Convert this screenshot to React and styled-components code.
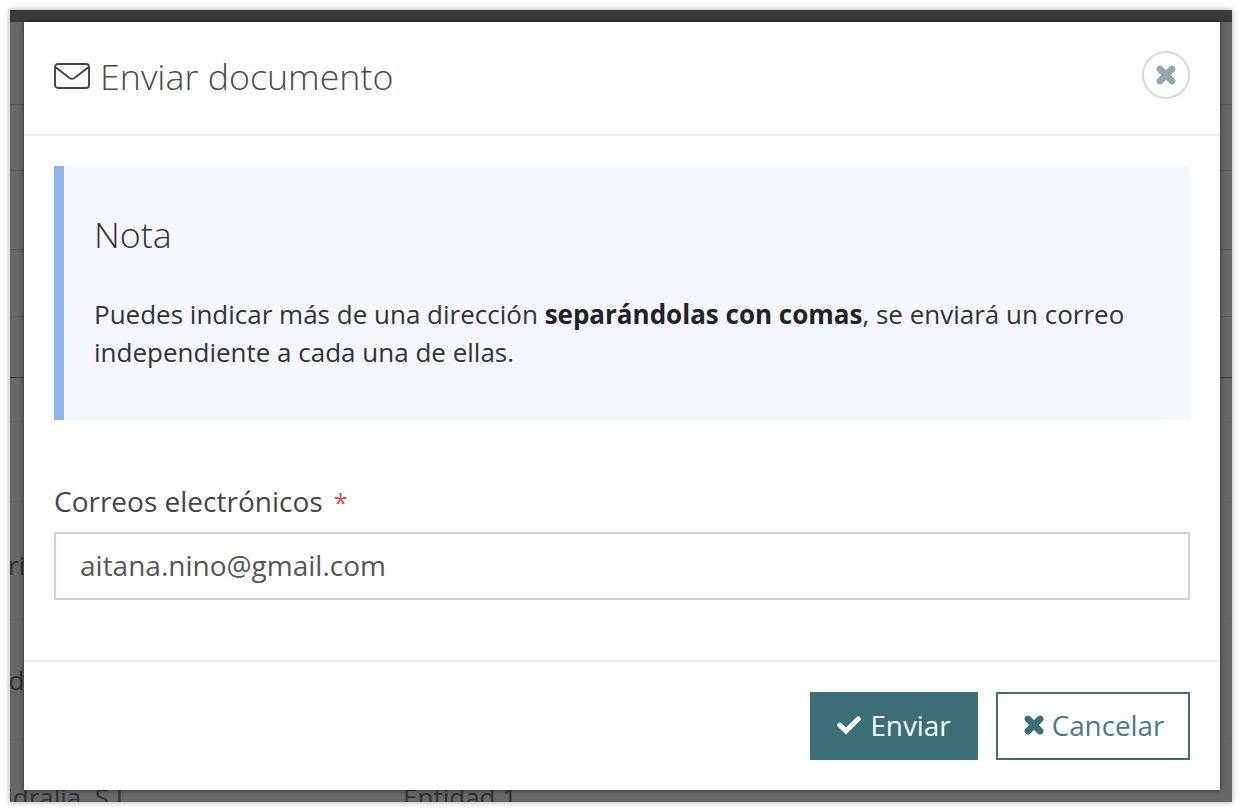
import React from "react";
import styled, { createGlobalStyle } from "styled-components";

const Global = createGlobalStyle`
  html, body { margin: 0; padding: 0; background: #fff; }
  body { font-family: "Open Sans", "Liberation Sans", sans-serif; }
`;

const Frame = styled.div`
  position: relative;
  box-sizing: border-box;
  width: 1222px;
  height: 792px;
  margin: 10px;
  overflow: hidden;
  background: #676767;
  box-shadow: 0 0 6px rgba(0, 0, 0, 0.35);
`;
const TopBar = styled.div`
  height: 12px;
  background: #3a3a3a;
`;
const BackRow = styled.div`
  box-sizing: border-box;
  height: ${(p) => p.$h}px;
  border-bottom: 1px solid ${(p) => p.$line};
`;
const BackText = styled.span`
  position: absolute;
  left: ${(p) => p.$x}px;
  top: ${(p) => p.$y}px;
  font-size: 26px;
  line-height: 36px;
  color: #333;
  white-space: nowrap;
`;
const Modal = styled.section`
  position: absolute;
  left: 14px;
  top: 12px;
  width: 1196px;
  height: 768px;
  background: #fff;
  display: flex;
  flex-direction: column;
  box-shadow: 0 0 5px rgba(0, 0, 0, 0.6);
`;
const Header = styled.header`
  box-sizing: border-box;
  height: 114px;
  flex: none;
  padding: 30px 30px 0;
  display: flex;
  align-items: flex-start;
  justify-content: space-between;
  border-bottom: 2px solid #eeeeee;
`;
const Title = styled.h1`
  margin: 0;
  display: flex;
  align-items: center;
  gap: 10px;
  font-size: 35.8px;
  line-height: 48px;
  font-weight: 300;
  color: #4a4a4a;
`;
const CloseButton = styled.button`
  box-sizing: border-box;
  width: 48px;
  height: 48px;
  margin-top: -1px;
  padding: 0;
  border: 2px solid #d9d9d9;
  border-radius: 50%;
  background: #fff;
  display: flex;
  align-items: center;
  justify-content: center;
`;
const Body = styled.div`
  flex: 1;
  padding: 30px 30px 0;
`;
const Note = styled.div`
  box-sizing: border-box;
  height: 254px;
  padding: 45px 30px 0;
  background: #f4f7fc;
  border-left: 10px solid #90b4e6;
`;
const NoteTitle = styled.h2`
  margin: 0 0 38px;
  font-size: 35.8px;
  line-height: 46px;
  font-weight: 300;
  color: #333;
`;
const NoteText = styled.p`
  margin: 0;
  font-size: 26px;
  line-height: 38px;
  color: #333;
  strong { font-weight: 700; color: #222; }
`;
const Field = styled.div`
  margin-top: 63px;
`;
const Label = styled.label`
  display: block;
  font-size: 28px;
  line-height: 36px;
  color: #444;
  margin-bottom: 12px;
`;
const Required = styled.span`
  color: #d9474d;
  font-size: 25px;
  margin-left: 4px;
`;
const Input = styled.input`
  box-sizing: border-box;
  display: block;
  width: 100%;
  height: 68px;
  padding: 0 24px 2px;
  border: 2px solid #ccd2e3;
  outline: none;
  background: #fff;
  font-family: inherit;
  font-size: 28px;
  color: #555;
`;
const Footer = styled.footer`
  box-sizing: border-box;
  height: 130px;
  flex: none;
  padding: 30px 30px 0;
  display: flex;
  justify-content: flex-end;
  gap: 18px;
  border-top: 2px solid #eeeeee;
`;
const Button = styled.button`
  box-sizing: border-box;
  height: 68px;
  padding: 0 0 2px;
  width: ${(p) => p.$w}px;
  display: flex;
  align-items: center;
  justify-content: center;
  gap: ${(p) => (p.$primary ? 9 : 6)}px;
  font-family: inherit;
  font-size: 27.8px;
  font-weight: 400;
  border: 2px solid #3a6f76;
  background: ${(p) => (p.$primary ? "#3a6f76" : "#fff")};
  color: ${(p) => (p.$primary ? "#fff" : "#4a7c83")};
`;

const MailIcon = () => (
  <svg width="36" height="26" viewBox="0 0 36 26" fill="none" stroke="#444" strokeWidth="1.9" strokeLinejoin="round">
    <rect x="1" y="1" width="34" height="24" rx="3" />
    <path d="M2 4.5 L15.5 15 Q18 16.8 20.5 15 L34 4.5" />
  </svg>
);
const Cross = ({ size, color }) => (
  <svg width={size} height={size} viewBox="0 0 20 20">
    <path d="M5 5 L15 15 M15 5 L5 15" stroke={color} strokeWidth="5.6" strokeLinecap="round" />
  </svg>
);
const Check = () => (
  <svg width="24" height="20" viewBox="0 0 24 20" fill="none">
    <path d="M2.8 10.2 L9 16 L21.2 4" stroke="#fff" strokeWidth="5" strokeLinecap="round" />
  </svg>
);

const rows = [
  [83, "#555"],
  [66, "#555"],
  [79, "#565656"],
  [67, "#585858"],
  [61, "#383838"],
  [44, "#626262"],
  [80, "#626262"],
  [118, "#626262"],
  [120, "#626262"],
];

export default function App() {
  return (
    <>
      <Global />
      <Frame>
        <TopBar />
        {rows.map(([h, line], i) => (
          <BackRow key={i} $h={h} $line={line} />
        ))}
        <BackText $x={-2} $y={537}>ris</BackText>
        <BackText $x={-16} $y={652}>Ed</BackText>
        <BackText $x={-23} $y={769}>Hidralia, S.L.</BackText>
        <BackText $x={393} $y={769}>Entidad 1</BackText>
        <Modal>
          <Header>
            <Title>
              <MailIcon />
              Enviar documento
            </Title>
            <CloseButton aria-label="Cerrar">
              <Cross size={24} color="#97a8aa" />
            </CloseButton>
          </Header>
          <Body>
            <Note>
              <NoteTitle>Nota</NoteTitle>
              <NoteText>
                Puedes indicar más de una dirección <strong>separándolas con comas</strong>, se enviará un correo independiente a cada una de ellas.
              </NoteText>
            </Note>
            <Field>
              <Label>
                Correos electrónicos <Required>*</Required>
              </Label>
              <Input readOnly value="aitana.nino@gmail.com" />
            </Field>
          </Body>
          <Footer>
            <Button $primary $w={168}>
              <Check />
              Enviar
            </Button>
            <Button $w={194}>
              <Cross size={24} color="#3a6f76" />
              Cancelar
            </Button>
          </Footer>
        </Modal>
      </Frame>
    </>
  );
}
